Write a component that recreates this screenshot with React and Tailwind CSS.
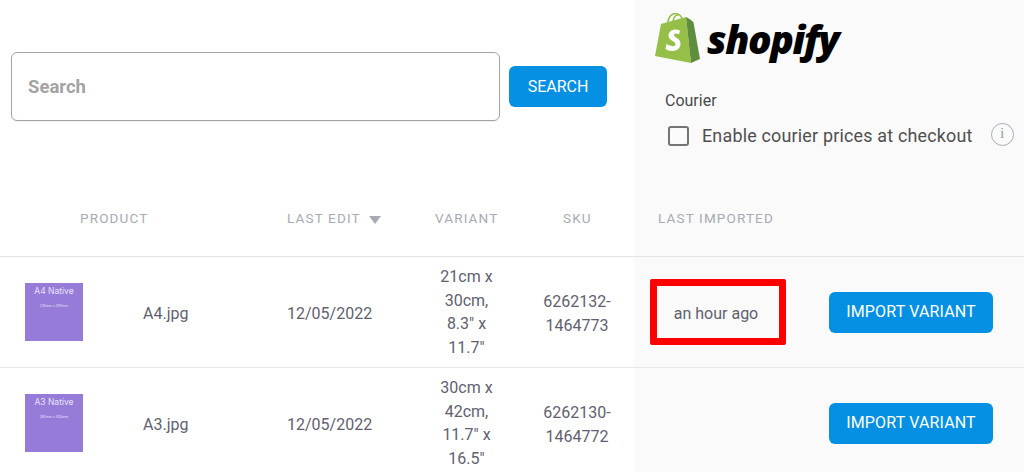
import React from "react";

const Logo = () => (
  <div className="flex items-center h-[74px] pl-[21px] pt-[4px]">
    <svg width="46" height="52" viewBox="0 0 46 52" className="shrink-0">
      <path d="M6 11 L31 4 L36 50 L0 43 Z" fill="#95bf47" />
      <path d="M31 4 L36 7 L38.5 9.5 L45 46 L36 50 Z" fill="#5e8e3e" />
      <path d="M13 10 C13 3 18 -0.5 22 0.8 C26 2 27.5 5 27.5 9 M18 8.5 C18.5 4 21 1.5 24 1.8" fill="none" stroke="#95bf47" strokeWidth="1.6" />
      <path d="M25 17.5 C20 15 13.5 17 13.5 22.5 C13.5 28 21 28 20.5 31.5 C20 34 16 33.5 11.5 31 L10.5 36 C14 39 25 39.5 25.5 31 C26 25 19 25 19 22 C19 20.5 21 19.5 24 21.5 Z" fill="#fff" />
    </svg>
    <span className="ml-[6px] mt-[-2px] text-[39px] leading-none font-extrabold italic tracking-[-1.4px] text-black [font-family:'Open_Sans',sans-serif]">shopify</span>
  </div>
);

const Btn = ({ children, className }) => (
  <div className={`flex items-center justify-center bg-[#0590e3] text-white rounded-md ${className}`}>{children}</div>
);

const Th = ({ className, children }) => (
  <div className={`text-[13.5px] tracking-[1.15px] text-[#a6abb5] ${className}`}>{children}</div>
);

const Row = ({ thumb, sub, name, size, sku, highlight }) => (
  <div className="flex h-[111px] border-b border-[#e8e8e8] text-[16px] text-[#5f6170]">
    <div className="w-[634px] flex items-center shrink-0">
      <div className="ml-[25px] w-[58px] h-[58px] bg-[#967bd9] flex flex-col items-center text-[#e9e2fa] [font-family:Inter,sans-serif]">
        <div className="text-[8.5px] leading-none mt-[4px]">{thumb}</div>
        <div className="text-[3.5px] leading-none mt-[9px]">{sub}</div>
      </div>
      <div className="ml-[60px] w-[144px] mt-[3px]">{name}</div>
      <div className="w-[130px] mt-[3px]">12/05/2022</div>
      <div className="w-[99px] text-center leading-[23.5px]">{size.map((s) => <div key={s}>{s}</div>)}</div>
      <div className="w-[118px] pl-[4px] text-center leading-[23.5px] mt-[3px]">{sku.map((s) => <div key={s}>{s}</div>)}</div>
    </div>
    <div className="flex-1 flex items-center bg-[#fafafa]">
      <div className={`ml-[16px] w-[136px] h-[66px] flex items-center justify-center rounded-[2px] ${highlight ? "border-[7px] border-[#fe0000]" : ""}`}>
        {highlight ? <span className="mt-[3px] mr-[4px]">an hour ago</span> : ""}
      </div>
      <Btn className="ml-[43px] w-[164px] h-[41px] text-[16px] tracking-[0.15px]">IMPORT VARIANT</Btn>
    </div>
  </div>
);

export default function App() {
  return (
    <div className="w-[1024px] h-[472px] overflow-hidden bg-white [font-family:Roboto,sans-serif]">
      <div className="flex h-[190px]">
        <div className="w-[634px] pl-[11px] pt-[52px] flex items-start">
          <div className="w-[489px] h-[69px] border border-[#a3a3a3] rounded-md flex items-center pl-[16px] pt-[3px] text-[18.5px] font-bold text-[#a3a3a3] shadow-[0_1px_1px_rgba(0,0,0,0.06)]">Search</div>
          <Btn className="ml-[9px] mt-[14px] w-[98px] h-[41px] text-[16px]">SEARCH</Btn>
        </div>
        <div className="flex-1 bg-[#fafafa] flex flex-col">
          <Logo />
          <div className="mt-[17px] pl-[31px] text-[16px] leading-[20px] text-[#4a4a4a]">Courier</div>
          <div className="mt-[14px] flex items-center pl-[34px] text-[#4f4f4f]">
            <div className="w-[21px] h-[20px] border-2 border-[#747474] rounded-[3px]" />
            <span className="ml-[13px] text-[17.9px] tracking-[0.2px] leading-[22px] whitespace-nowrap">Enable courier prices at checkout</span>
            <div className="ml-[18px] mt-[-4px] w-[23px] h-[23px] rounded-full border border-[#a8adb5] flex items-center justify-center text-[14px] leading-none text-[#8f949c] [font-family:'Liberation_Serif',serif]">i</div>
          </div>
        </div>
      </div>
      <div className="flex h-[67px] border-b border-[#e4e4e4]">
        <div className="w-[634px] flex items-start pt-[21px] shrink-0 leading-[15px]">
          <Th className="ml-[80px] w-[207px]">PRODUCT</Th>
          <Th className="w-[148px] flex items-center">
            LAST EDIT
            <svg width="12" height="8" viewBox="0 0 12 8" className="ml-[8px] mt-[3px]"><path d="M0 0H12L6 8Z" fill="#a6abb5" /></svg>
          </Th>
          <Th className="w-[128px]">VARIANT</Th>
          <Th>SKU</Th>
        </div>
        <div className="flex-1 bg-[#fafafa] pt-[21px] leading-[15px]">
          <Th className="ml-[24px]">LAST IMPORTED</Th>
        </div>
      </div>
      <Row thumb="A4 Native" sub="210mm x 297mm" name="A4.jpg" size={["21cm x", "30cm,", "8.3\" x", "11.7\""]} sku={["6262132-", "1464773"]} highlight />
      <Row thumb="A3 Native" sub="297mm x 420mm" name="A3.jpg" size={["30cm x", "42cm,", "11.7\" x", "16.5\""]} sku={["6262130-", "1464772"]} />
    </div>
  );
}
